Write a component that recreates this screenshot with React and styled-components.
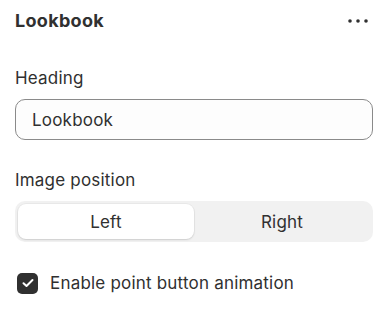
import styled, { createGlobalStyle } from "styled-components";

const Global = createGlobalStyle`
  body {
    margin: 0;
    background: #fff;
    font-family: Inter, "Noto Sans", sans-serif;
    color: #303030;
  }
`;

const Panel = styled.div`
  width: 390px;
  padding: 9px 17px 0 15px;
  box-sizing: border-box;
  display: flex;
  flex-direction: column;
`;

const Header = styled.div`
  display: flex;
  align-items: center;
  justify-content: space-between;
  height: 24px;
`;

const Title = styled.h2`
  margin: 0;
  font-size: 18px;
  font-weight: 650;
  letter-spacing: 0.3px;
  line-height: 24px;
  color: #303030;
`;

const MoreButton = styled.button`
  border: 0;
  background: none;
  padding: 0;
  margin-right: 5px;
  width: 20px;
  height: 20px;
  display: flex;
  align-items: center;
  justify-content: center;
  color: #303030;
`;

const Field = styled.div`
  display: flex;
  flex-direction: column;
  gap: 11px;
  margin-top: ${(p) => p.$top}px;
`;

const Label = styled.label`
  font-size: 17px;
  letter-spacing: 0.2px;
  line-height: 20px;
  color: #303030;
`;

const Input = styled.input`
  height: 41px;
  box-sizing: border-box;
  border: 1px solid #8a8a8a;
  border-radius: 10px;
  background: #fdfdfd;
  padding: 0 16px;
  font-family: inherit;
  font-size: 17px;
  letter-spacing: 0.2px;
  color: #303030;
  outline: none;
`;

const Segmented = styled.div`
  display: grid;
  grid-template-columns: 1fr 1fr;
  height: 41px;
  box-sizing: border-box;
  padding: 3px;
  background: #f1f1f1;
  border-radius: 10px;
`;

const Segment = styled.button`
  border: 0;
  border-radius: 8px;
  font-family: inherit;
  font-size: 17px;
  letter-spacing: 0.2px;
  color: #303030;
  background: ${(p) => (p.$active ? "#fff" : "transparent")};
  box-shadow: ${(p) =>
    p.$active ? "0 1px 2px rgba(0,0,0,0.12), 0 0 0 1px rgba(0,0,0,0.03)" : "none"};
`;

const CheckRow = styled.label`
  display: flex;
  align-items: center;
  gap: 12px;
  margin-top: 30px;
  padding-left: 2px;
  font-size: 17px;
  letter-spacing: 0.2px;
  line-height: 22px;
`;

const Box = styled.span`
  width: 21px;
  height: 21px;
  border-radius: 5px;
  background: #303030;
  display: flex;
  align-items: center;
  justify-content: center;
`;

export default function App() {
  return (
    <Panel>
      <Global />
      <Header>
        <Title>Lookbook</Title>
        <MoreButton aria-label="More">
          <svg width="20" height="6" viewBox="0 0 20 6">
            <circle cx="2" cy="3" r="1.8" fill="#303030" />
            <circle cx="10" cy="3" r="1.8" fill="#303030" />
            <circle cx="18" cy="3" r="1.8" fill="#303030" />
          </svg>
        </MoreButton>
      </Header>
      <Field $top={35}>
        <Label>Heading</Label>
        <Input defaultValue="Lookbook" />
      </Field>
      <Field $top={30}>
        <Label>Image position</Label>
        <Segmented>
          <Segment $active>Left</Segment>
          <Segment>Right</Segment>
        </Segmented>
      </Field>
      <CheckRow>
        <Box>
          <svg width="12" height="10" viewBox="0 0 12 10">
            <path d="M1.5 5.2 L4.5 8 L10.5 2" fill="none" stroke="#fff" strokeWidth="2" strokeLinecap="round" strokeLinejoin="round" />
          </svg>
        </Box>
        Enable point button animation
      </CheckRow>
    </Panel>
  );
}
